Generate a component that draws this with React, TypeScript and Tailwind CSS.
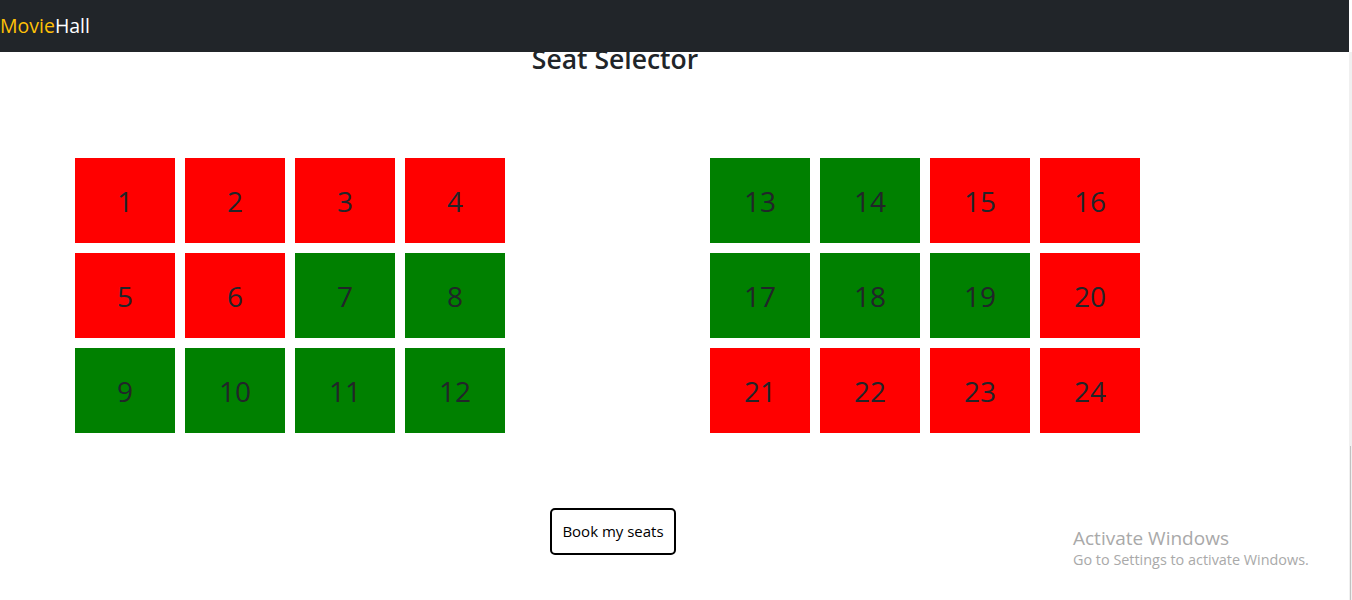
const seats = [
  { id: 1, booked: true },
  { id: 2, booked: true },
  { id: 3, booked: true },
  { id: 4, booked: true },
  { id: 5, booked: true },
  { id: 6, booked: true },
  { id: 7, booked: false },
  { id: 8, booked: false },
  { id: 9, booked: false },
  { id: 10, booked: false },
  { id: 11, booked: false },
  { id: 12, booked: false },
  { id: 13, booked: false },
  { id: 14, booked: false },
  { id: 15, booked: true },
  { id: 16, booked: true },
  { id: 17, booked: false },
  { id: 18, booked: false },
  { id: 19, booked: false },
  { id: 20, booked: true },
  { id: 21, booked: true },
  { id: 22, booked: true },
  { id: 23, booked: true },
  { id: 24, booked: true },
];

const font = { fontFamily: '"Open Sans", "Noto Sans", sans-serif' };

const Seat = ({ id, booked }: { id: number; booked: boolean }) => (
  <div
    className={`flex h-[85px] w-[100px] items-center justify-center text-[28px] font-normal text-[#212529] ${
      booked ? "bg-[#ff0000]" : "bg-[#008000]"
    }`}
  >
    {id}
  </div>
);

const SeatBlock = ({ list }: { list: typeof seats }) => (
  <div className="grid grid-cols-[repeat(4,100px)] gap-[10px]">
    {list.map((s) => (
      <Seat key={s.id} id={s.id} booked={s.booked} />
    ))}
  </div>
);

export default function App() {
  return (
    <div className="relative h-[600px] w-[1352px] overflow-hidden bg-white" style={font}>
      {/* navbar sits on top of the page */}
      <nav className="fixed left-0 top-0 z-10 flex h-[52px] w-[1349px] items-center bg-[#212529] text-[19.5px]">
        <span className="text-[#ffc107]">Movie</span>
        <span className="text-white">Hall</span>
      </nav>

      <div className="flex h-full">
        <main className="w-[1349px]">
          <h3 className="mt-[41px] w-[1230px] text-center text-[26.5px] font-semibold leading-[36px] text-[#212529]">
            Seat Selector
          </h3>

          <div className="mt-[81px] flex gap-[205px] pl-[75px]">
            <SeatBlock list={seats.slice(0, 12)} />
            <SeatBlock list={seats.slice(12)} />
          </div>

          <div className="mt-[75px] flex w-[1226px] justify-center">
            <button className="h-[47px] w-[126px] rounded-[5px] border-2 border-black bg-white text-[15px] text-black">
              Book my seats
            </button>
          </div>
        </main>

        {/* browser scrollbar */}
        <div className="mt-[52px] flex w-[3px] flex-col bg-[#f0f0f0]">
          <div className="h-[394px]" />
          <div className="ml-[1px] w-[1px] flex-1 bg-[#c1c1c1]" />
        </div>
      </div>

      <div className="absolute left-[1073px] top-[526px] text-[#a9a9a9]">
        <div className="text-[19px] leading-[24px]">Activate Windows</div>
        <div className="text-[14.4px] leading-[20px]">Go to Settings to activate Windows.</div>
      </div>
    </div>
  );
}
